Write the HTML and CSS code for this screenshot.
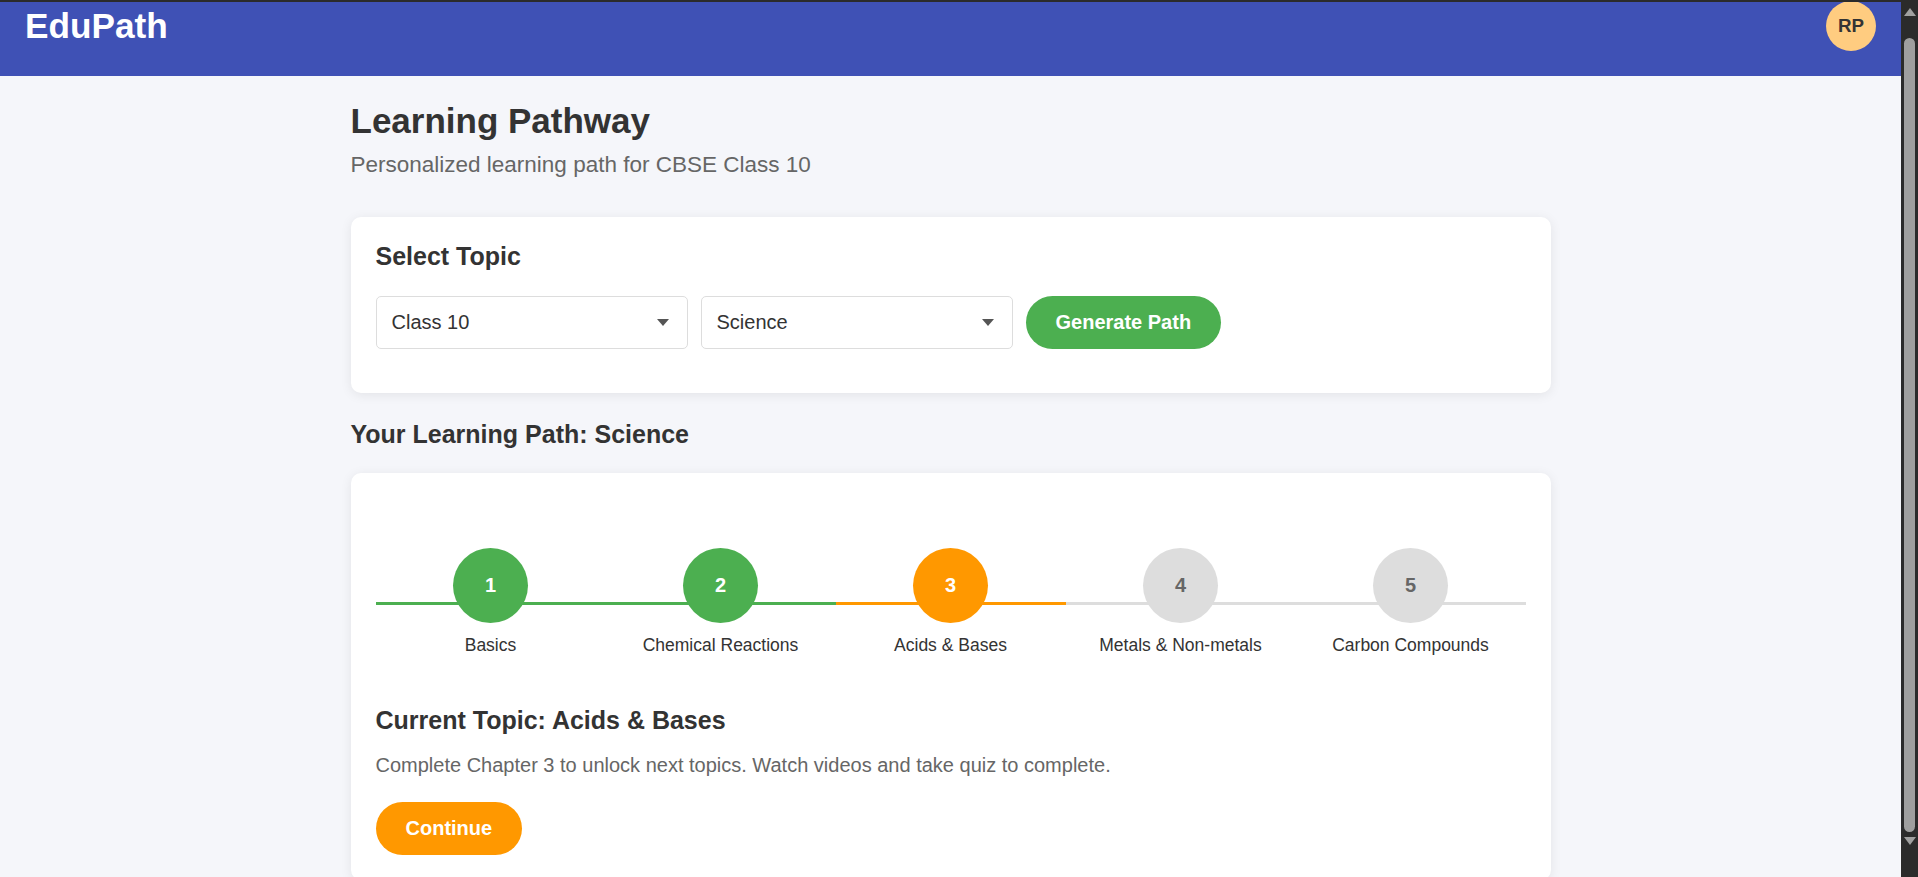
FILE: index.html
```html
<!DOCTYPE html>
<html lang="en">
<head>
<meta charset="utf-8">
<title>EduPath - Learning Pathway</title>
<link rel="stylesheet" href="styles.css">
</head>
<body>
<div class="topline"></div>
<div class="window">
  <div class="page">
    <header class="app-header">
      <div class="logo">EduPath</div>
      <div class="avatar">RP</div>
    </header>
    <main class="container">
      <h1 class="page-title">Learning Pathway</h1>
      <p class="page-sub">Personalized learning path for CBSE Class 10</p>

      <section class="card select-card">
        <h3 class="card-title">Select Topic</h3>
        <div class="controls">
          <div class="select-wrap">
            <select class="select">
              <option>Class 10</option>
            </select>
          </div>
          <div class="select-wrap">
            <select class="select">
              <option>Science</option>
            </select>
          </div>
          <button class="btn btn-green">Generate Path</button>
        </div>
      </section>

      <h2 class="section-title">Your Learning Path: Science</h2>

      <section class="card path-card">
        <div class="steps">
          <div class="step done">
            <div class="circle">1</div>
            <div class="label">Basics</div>
          </div>
          <div class="step done">
            <div class="circle">2</div>
            <div class="label">Chemical Reactions</div>
          </div>
          <div class="step current">
            <div class="circle">3</div>
            <div class="label">Acids &amp; Bases</div>
          </div>
          <div class="step locked">
            <div class="circle">4</div>
            <div class="label">Metals &amp; Non-metals</div>
          </div>
          <div class="step locked">
            <div class="circle">5</div>
            <div class="label">Carbon Compounds</div>
          </div>
        </div>
        <h3 class="current-title">Current Topic: Acids &amp; Bases</h3>
        <p class="current-text">Complete Chapter 3 to unlock next topics. Watch videos and take quiz to complete.</p>
        <button class="btn btn-orange">Continue</button>
      </section>
    </main>
  </div>
  <div class="scrollbar">
    <div class="arrow-up"></div>
    <div class="thumb"></div>
    <div class="arrow-down"></div>
  </div>
</div>
</body>
</html>
```

FILE: styles.css
```css
* {
  box-sizing: border-box;
}

html, body {
  margin: 0;
  padding: 0;
  height: 100%;
  overflow: hidden;
}

body {
  font-family: "Liberation Sans", Arial, sans-serif;
  color: #333;
  background: #2b2b2b;
  display: flex;
  flex-direction: column;
}

.topline {
  height: 2px;
  flex: 0 0 2px;
  background: #2b2b2b;
}

.window {
  flex: 1;
  display: flex;
  min-height: 0;
}

.page {
  flex: 1;
  min-width: 0;
  overflow: hidden;
  background: #f5f6fa;
}

/* Header */
.app-header {
  display: flex;
  justify-content: space-between;
  align-items: center;
  height: 74px;
  padding: 0 25px 26px 25px;
  background: #3f51b5;
}

.logo {
  font-size: 35.2px;
  line-height: 40px;
  font-weight: bold;
  color: #fff;
}

.avatar {
  width: 50px;
  height: 50px;
  flex: 0 0 50px;
  border-radius: 50%;
  background: #ffcc80;
  color: #333;
  font-weight: bold;
  font-size: 18.75px;
  display: flex;
  align-items: center;
  justify-content: center;
}

/* Main */
.container {
  width: 1200px;
  margin: 0 auto;
  padding-top: 25px;
}

.page-title {
  margin: 0;
  font-size: 35px;
  line-height: 40px;
  font-weight: bold;
  color: #333;
}

.page-sub {
  margin: 11px 0 38.6px;
  font-size: 22.5px;
  line-height: 26px;
  color: #666;
}

.card {
  background: #fff;
  border-radius: 10px;
  box-shadow: 0 2px 12px rgba(0, 0, 0, 0.08);
  padding: 25px;
}

.card-title {
  margin: 0 0 26.3px;
  font-size: 25px;
  line-height: 28px;
  font-weight: bold;
}

.controls {
  display: flex;
  align-items: center;
  gap: 12.5px;
  margin-bottom: 19px;
}

.select-wrap {
  position: relative;
  width: 312.5px;
  height: 53px;
}

.select-wrap::after {
  content: "";
  position: absolute;
  right: 19px;
  top: 23px;
  width: 0;
  height: 0;
  border-left: 6.5px solid transparent;
  border-right: 6.5px solid transparent;
  border-top: 7px solid #555;
  pointer-events: none;
}

.select {
  -webkit-appearance: none;
  appearance: none;
  width: 100%;
  height: 100%;
  border: 1px solid #ddd;
  border-radius: 5px;
  background: #fff;
  padding: 0 40px 0 15px;
  font-family: inherit;
  font-size: 20px;
  color: #333;
}

.btn {
  border: none;
  border-radius: 27px;
  padding: 15px 30px;
  font-family: inherit;
  font-size: 20px;
  line-height: 23px;
  font-weight: bold;
  color: #fff;
  cursor: pointer;
}

.btn-green {
  background: #4caf50;
}

.btn-orange {
  background: #ff9800;
}

.section-title {
  margin: 25.7px 0 24px;
  font-size: 25px;
  line-height: 30px;
  font-weight: bold;
}

/* Steps */
.steps {
  display: grid;
  grid-template-columns: repeat(5, 1fr);
  padding-top: 50px;
  margin-bottom: 51px;
}

.step {
  position: relative;
  display: flex;
  flex-direction: column;
  align-items: center;
}

.step::before {
  content: "";
  position: absolute;
  left: 0;
  right: 0;
  top: 54.5px;
  height: 3px;
  background: #ddd;
}

.step.done::before {
  background: #4caf50;
}

.step.current::before {
  background: #ff9800;
}

.circle {
  position: relative;
  z-index: 1;
  width: 75px;
  height: 75px;
  border-radius: 50%;
  display: flex;
  align-items: center;
  justify-content: center;
  font-size: 20px;
  font-weight: bold;
  color: #fff;
  background: #ddd;
}

.step.done .circle {
  background: #4caf50;
}

.step.current .circle {
  background: #ff9800;
}

.step.locked .circle {
  color: #666;
}

.label {
  margin-top: 12px;
  font-size: 17.5px;
  line-height: 20px;
  color: #333;
}

.current-title {
  margin: 0 0 19px;
  font-size: 25px;
  line-height: 28px;
  font-weight: bold;
}

.current-text {
  margin: 0 0 25px;
  font-size: 20px;
  line-height: 24px;
  color: #666;
}

/* Scrollbar */
.scrollbar {
  width: 17px;
  flex: 0 0 17px;
  background: #2b2b2b;
  display: flex;
  flex-direction: column;
  align-items: center;
}

.arrow-up {
  margin-top: 6px;
  width: 0;
  height: 0;
  border-left: 6px solid transparent;
  border-right: 6px solid transparent;
  border-bottom: 8px solid #a0a0a0;
}

.thumb {
  margin-top: 22px;
  width: 11px;
  height: 794px;
  border-radius: 6px;
  background: #9f9f9f;
}

.arrow-down {
  margin-top: 5px;
  width: 0;
  height: 0;
  border-left: 6px solid transparent;
  border-right: 6px solid transparent;
  border-top: 8px solid #a0a0a0;
}
```
